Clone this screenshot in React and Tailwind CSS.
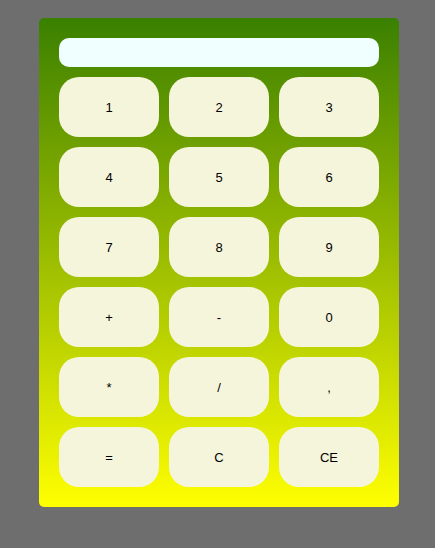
const keys = ["1", "2", "3", "4", "5", "6", "7", "8", "9", "+", "-", "0", "*", "/", ",", "=", "C", "CE"];

export default function App() {
  return (
    <main className="flex min-h-screen items-start justify-center bg-[#6e6e6e] pt-[18px] pr-[36px] pb-10 pl-[39px] font-['Liberation_Sans',Arial,sans-serif]">
      <section
        aria-label="Calculator"
        className="w-full max-w-[360px] rounded-[5px] bg-linear-to-b from-[#398000] to-[#ffff00] p-5"
      >
        <input
          type="text"
          aria-label="Display"
          className="mb-[10px] block h-[29px] w-full rounded-[10px] bg-[#f0ffff] px-2 text-sm text-black outline-none"
        />
        <div className="grid grid-cols-3 gap-[10px]">
          {keys.map((key) => (
            <button
              key={key}
              type="button"
              className="h-[60px] rounded-[20px] bg-[#f5f5dc] pt-0.5 text-[13px] text-black"
            >
              {key}
            </button>
          ))}
        </div>
      </section>
    </main>
  );
}
